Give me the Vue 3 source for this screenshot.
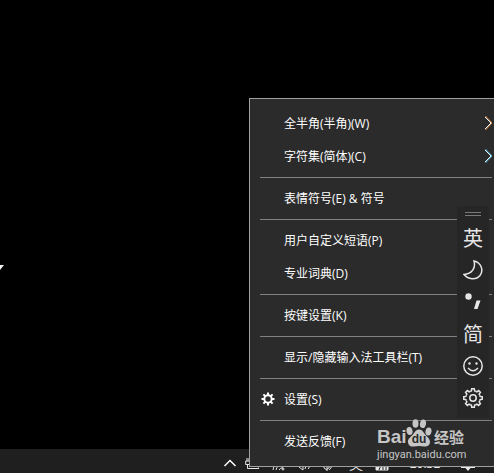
<template>
  <div class="desktop">
    <svg class="cursor" viewBox="0 0 4 6" aria-hidden="true">
      <path d="M0 0H4L0 5Z" fill="#f4f4f4" />
    </svg>

    <footer class="taskbar">
      <button class="tray-item tray-toggle" type="button" aria-label="显示隐藏的图标">
        <svg viewBox="0 0 14 14"><path d="M1.500 9 7 3.500 12.500 9" /></svg>
      </button>
      <button class="tray-item" type="button" aria-label="电源">
        <svg viewBox="0 0 14 14"><path d="M2 1v3M4 1v3M.7 4h4v3.500h-4zM2.500 8v3.500H14V5H7" /></svg>
      </button>
      <button class="tray-item" type="button" aria-label="网络">
        <svg viewBox="0 0 14 14">
          <path d="M2 13Q3 4 12 3M5 13q1-5 7-6M8 13q1-2 4-2.500" />
          <circle cx="12" cy="12" r="1" />
        </svg>
      </button>
      <button class="tray-item" type="button" aria-label="音量">
        <svg viewBox="0 0 14 14"><path d="M0 7h2l4-4v10L2 10M8 6q2 3 0 6M11 3q4 5 0 9" /></svg>
      </button>
      <button class="tray-item" type="button" aria-label="手写笔">
        <svg viewBox="0 0 14 14"><path d="M1 1v10q2 3 5 0L8 1M4 8v6M6 7q5 2 0 6" /></svg>
      </button>
      <button class="tray-item tray-text" type="button">英</button>
      <button class="tray-item" type="button" aria-label="输入法">
        <svg viewBox="0 0 14 14">
          <path d="M1 2h12v11H1z" fill="#e8e8e8" />
          <path d="M4 13l2-5M8 8v5M11 8v5" stroke="#222" />
        </svg>
      </button>
      <time class="clock">20:32</time>
      <button class="tray-item" type="button" aria-label="通知">
        <svg viewBox="0 0 14 14"><path d="M0 2h14v9H9.500L7 14l-2.500-3H0z" fill="#e8e8e8" stroke="none" /></svg>
      </button>
    </footer>

    <nav class="menu">
      <div v-for="(group, i) in groups" :key="i" class="group">
        <button v-for="item in group" :key="item.label" class="menu-item" type="button">
          <span class="menu-icon">
            <svg v-if="item.icon" viewBox="0 0 14 14" class="gear-small">
              <path v-for="a in 8" :key="a" d="M7 .5V3.500" :transform="`rotate(${a * 45} 7 7)`" />
              <circle cx="7" cy="7" r="3.700" />
            </svg>
          </span>
          <span class="menu-label">{{ item.label }}</span>
          <svg v-if="item.arrow" viewBox="0 0 8 14" class="arrow">
            <path d="M1 1 7 7 1 13" class="arrow-line" />
            <path d="M1.500 0 8 7 1.500 14" :class="item.arrow" />
          </svg>
        </button>
      </div>

      <div class="brand">
        <div class="brand-name">
          <span class="bai">Bai</span>
          <span class="paw">
            <svg viewBox="0 0 26 28" aria-hidden="true">
              <ellipse cx="3.500" cy="12" rx="3" ry="4" transform="rotate(-12 3.500 12)" />
              <ellipse cx="9.500" cy="4.500" rx="3" ry="4.300" />
              <ellipse cx="17" cy="4.800" rx="3" ry="4.300" transform="rotate(12 17 4.800)" />
              <ellipse cx="22.500" cy="12.500" rx="3" ry="4" transform="rotate(12 22.500 12.500)" />
              <path d="M13 10.500c-3.500 0-4.500 3.500-7 6-2.500 2.300-4.500 4-4 7 .5 3.500 3.500 4.500 6 4 3.500-.7 6.500-.7 10 0 3 .5 5.500-.7 6-4 .4-3-2-5-4-7-2.500-2.500-3.500-6-7-6z" />
            </svg>
            <span class="du">du</span>
          </span>
          <span class="jingyan">经验</span>
        </div>
        <div class="brand-url">jingyan.baidu.com</div>
      </div>
    </nav>

    <aside class="ime-bar">
      <div class="handle"></div>
      <button class="ime-item" type="button">英</button>
      <button class="ime-item" type="button" aria-label="半角">
        <svg viewBox="0 0 20 20"><path d="M11 1C13 8 9 14 1 14.500 5 19.500 13 20.500 17 15.500 21 10 18 2.500 11 1Z" /></svg>
      </button>
      <button class="ime-item" type="button" aria-label="标点">
        <svg viewBox="0 0 20 20">
          <circle cx="5.500" cy="4.500" r="3.200" class="solid" />
          <path d="M13.500 8.500h4l-3 8.500h-3.500z" class="solid" />
        </svg>
      </button>
      <button class="ime-item" type="button">简</button>
      <button class="ime-item" type="button" aria-label="表情">
        <svg viewBox="0 0 20 20">
          <circle cx="10" cy="10" r="9.200" />
          <circle cx="6.500" cy="7.500" r="1.200" class="solid" />
          <circle cx="13.500" cy="7.500" r="1.200" class="solid" />
          <path d="M5 12q5 5.500 10 0" />
        </svg>
      </button>
      <button class="ime-item" type="button" aria-label="设置">
        <svg viewBox="0 0 20 20">
          <path
            v-for="a in 8"
            :key="a"
            d="M7.200 3.300 8.400 2.900 8.700.8H11.300L11.600 2.900 12.800 3.300"
            :transform="`rotate(${a * 45} 10 10)`"
          />
          <circle cx="10" cy="10" r="3.200" />
        </svg>
      </button>
    </aside>
  </div>
</template>

<script setup>
const groups = [
  [
    { label: '全半角(半角)(W)', arrow: 'warm' },
    { label: '字符集(简体)(C)', arrow: 'cool' }
  ],
  [{ label: '表情符号(E) & 符号' }],
  [{ label: '用户自定义短语(P)' }, { label: '专业词典(D)' }],
  [{ label: '按键设置(K)' }],
  [{ label: '显示/隐藏输入法工具栏(T)' }],
  [{ label: '设置(S)', icon: true }],
  [{ label: '发送反馈(F)' }]
]
</script>

<style>
body {
  margin: 0;
  background: #000;
}
</style>

<style scoped>
.desktop {
  position: relative;
  display: flex;
  flex-direction: column;
  justify-content: flex-end;
  min-height: 100vh;
  overflow: hidden;
  background: #000;
  color: #fff;
  font-family: "Open Sans", "Noto Sans CJK SC", sans-serif;
  font-size: 12px;
}

button {
  box-sizing: border-box;
  margin: 0;
  padding: 0;
  border: 0;
  background: none;
  color: inherit;
  font: inherit;
}

svg {
  display: block;
  fill: none;
  stroke: currentColor;
}

.cursor {
  position: absolute;
  left: 0;
  top: 265px;
  width: 4px;
  height: 6px;
  stroke: none;
}

/* taskbar */
.taskbar {
  display: flex;
  justify-content: flex-end;
  align-items: center;
  gap: 12px;
  height: 24px;
  padding: 0 19px 0 0;
  background: #1f1f1f;
  color: #e8e8e8;
}

.tray-item {
  flex: none;
  width: 14px;
  height: 14px;
  margin-top: 6px;
}

.tray-toggle {
  margin-right: -4px;
  color: #fff;
}

.tray-toggle svg {
  stroke-width: 1.5;
}

.tray-text {
  font-size: 14px;
  line-height: 14px;
}

.clock {
  width: 32px;
  margin: 6px 8px 0;
  line-height: 16px;
  text-align: center;
}

/* context menu */
.menu {
  position: absolute;
  right: 0;
  bottom: 6px;
  box-sizing: border-box;
  width: 245px;
  padding: 8px 2px 8px 10px;
  border: 1px solid #a0a0a0;
  border-right: 0;
  background: #2b2b2b;
}

.group + .group {
  margin-top: 4px;
  padding-top: 4px;
  border-top: 1px solid #808080;
}

.menu-item {
  display: flex;
  align-items: center;
  width: 100%;
  height: 33px;
  padding-bottom: 2px;
  text-align: left;
}

.menu-icon {
  flex: none;
  width: 24px;
}

.menu-label {
  flex: 1;
  white-space: nowrap;
}

.gear-small {
  width: 14px;
  height: 14px;
  margin-left: 1px;
  stroke-width: 2;
}

.arrow {
  width: 8px;
  height: 14px;
}

.arrow-line {
  stroke: #e8f4ff;
}

.warm {
  stroke: #e09040;
}

.cool {
  stroke: #50b8d0;
}

/* floating input bar */
.ime-bar {
  position: absolute;
  right: 5px;
  bottom: 55px;
  width: 32px;
  padding-bottom: 3px;
  background: #262626;
  color: #e6e6e6;
}

.handle {
  box-sizing: border-box;
  width: 16px;
  height: 4px;
  margin: 6px 8px 7px;
  border: solid #787878;
  border-width: 1px 0;
}

.ime-item {
  display: flex;
  align-items: center;
  justify-content: center;
  width: 32px;
  height: 32px;
  font-size: 20px;
  line-height: 32px;
}

.ime-item svg {
  width: 20px;
  height: 20px;
  margin-bottom: 2px;
  stroke-width: 1.5;
}

.ime-item .solid {
  fill: currentColor;
  stroke: none;
}

/* brand mark over the menu corner */
.brand {
  position: absolute;
  right: 26px;
  bottom: 3px;
  width: 91px;
  color: #c6c6c6;
}

.brand-name {
  display: flex;
  align-items: flex-end;
}

.bai {
  width: 29px;
  font-family: "Liberation Sans", sans-serif;
  font-size: 19px;
  font-weight: 700;
  line-height: 20px;
}

.paw {
  position: relative;
  width: 26px;
}

.paw svg {
  width: 26px;
  height: 28px;
  fill: currentColor;
  stroke: none;
}

.du {
  position: absolute;
  left: 0;
  right: 0;
  bottom: 0;
  color: #2b2b2b;
  font-family: "Liberation Sans", sans-serif;
  font-size: 12px;
  font-weight: 700;
  line-height: 16px;
  text-align: center;
}

.jingyan {
  margin-left: 2px;
  font-size: 15px;
  font-weight: 700;
  line-height: 20px;
}

.brand-url {
  font-family: Roboto, sans-serif;
  font-size: 11px;
  line-height: 16px;
}
</style>
